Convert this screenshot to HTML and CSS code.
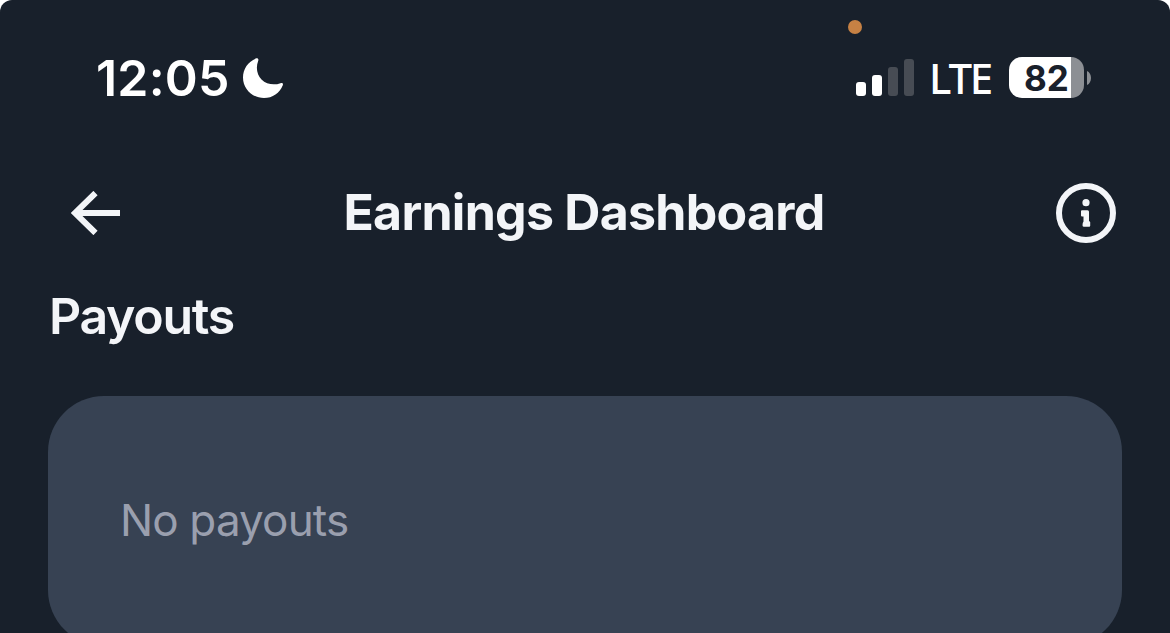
FILE: index.html
```
<!DOCTYPE html>
<html lang="en">
<head>
    <meta charset="UTF-8">
    <meta name="viewport" content="width=device-width, initial-scale=1.0">
    <title>Earnings Dashboard</title>
    <link rel="stylesheet" href="styles.css">
</head>
<body>
    <div class="screen">
        <!-- Status bar -->
        <div class="status-bar">
            <div class="status-left">
                <span class="time">12:05</span>
                <svg class="moon" viewBox="0 0 40 40">
                    <path d="M13.2 .3C14.6-.2 15.8 1 15.3 2.5C12.500 9.500 14 17 18.500 21.500C23.500 26.500 31 27.500 37.500 25.200C39.300 24.600 40.400 25.600 39.800 27.200C36.800 35 29.500 40 21 40C9.500 40 0 31 0 19.500C0 11 5 3.500 13.200 .3Z" fill="#fff"/>
                </svg>
            </div>
            <div class="status-right">
                <span class="mic-dot"></span>
                <div class="signal">
                    <span class="bar bar1"></span>
                    <span class="bar bar2"></span>
                    <span class="bar bar3 off"></span>
                    <span class="bar bar4 off"></span>
                </div>
                <span class="network">LTE</span>
                <div class="battery"><span class="battery-level">82</span></div>
                <svg class="battery-cap" viewBox="0 0 4 14">
                    <path d="M0 0C2.500 1 4 3.700 4 7S2.500 13 0 14Z" fill="#8c8f94"/>
                </svg>
            </div>
        </div>

        <!-- Navigation -->
        <header class="nav">
            <svg class="back" viewBox="0 0 50 44">
                <path d="M24.500 2L4 22L24.500 42M4 22H49" fill="none" stroke="#f3f5f8" stroke-width="6"/>
            </svg>
            <h1 class="title">Earnings Dashboard</h1>
            <svg class="info" viewBox="0 0 60 60">
                <circle cx="30" cy="30" r="27" fill="none" stroke="#f3f5f8" stroke-width="6"/>
                <circle cx="30" cy="19.700" r="3.600" fill="#f3f5f8"/>
                <path d="M26 27.200H31.500Q33 27.200 33 28.700V38.200H33.200Q34.200 38.200 34.200 39.200V42.800Q34.200 43.800 33.200 43.800H28Q26.500 43.800 26.500 42.300Q26.500 39.500 27.500 38.500V33.500H26Q25 33.500 25 32.500V28.200Q25 27.200 26 27.200Z" fill="#f3f5f8"/>
            </svg>
        </header>

        <main class="content">
            <h2 class="section-title">Payouts</h2>
            <div class="card">
                <p class="empty">No payouts</p>
            </div>
        </main>
    </div>
</body>
</html>
```
FILE: styles.css
```
* {
    box-sizing: border-box;
}

body {
    margin: 0;
    background: #fff;
    font-family: Inter, "Liberation Sans", sans-serif;
    overflow: hidden;
}

.screen {
    height: 633px;
    background: #18202b;
    border-radius: 12px 12px 0 0;
    overflow: hidden;
}

/* Status bar */
.status-bar {
    display: flex;
    justify-content: space-between;
    height: 156px;
    padding: 57px 79px 0 96px;
    color: #fff;
}

.status-left,
.status-right {
    display: flex;
    align-items: center;
    height: 41px;
}

.time {
    width: 147px;
    padding-top: 2px;
    font-size: 50px;
    font-weight: 600;
    line-height: 41px;
    letter-spacing: 0.2px;
}

.moon {
    width: 40px;
    height: 40px;
}

.status-right {
    position: relative;
}

/* microphone in use */
.mic-dot {
    position: absolute;
    top: -37px;
    left: -8px;
    width: 14px;
    height: 14px;
    border-radius: 50%;
    background: #c68144;
}

.signal {
    display: flex;
    align-items: flex-end;
    gap: 6px;
    height: 37px;
    margin-right: 15px;
}

.bar {
    width: 10px;
    border-radius: 3px;
    background: #fff;
}

.bar1 { height: 14px; }
.bar2 { height: 21px; }
.bar3 { height: 29px; }
.bar4 { height: 37px; }

.bar.off {
    background: #474c54;
}

.network {
    width: 80px;
    font-family: "Noto Sans", Inter, sans-serif;
    font-size: 42px;
    font-weight: 500;
    line-height: 41px;
    letter-spacing: -2.2px;
}

.battery {
    width: 75px;
    height: 41px;
    border-radius: 13px;
    background: linear-gradient(to right, #fff 62px, #8c8f94 62px);
}

.battery-level {
    display: block;
    padding-left: 15px;
    color: #19202b;
    font-size: 35px;
    font-weight: 700;
    line-height: 42px;
}

.battery-cap {
    width: 4px;
    height: 14px;
    margin-left: 3px;
}

/* Navigation */
.nav {
    display: flex;
    align-items: center;
    justify-content: space-between;
    height: 114px;
    padding: 0 54px 0 71px;
}

.back {
    width: 50px;
    height: 44px;
}

.title {
    margin: 0;
    padding: 0 9px 2px 0;
    color: #f3f5f8;
    font-size: 50px;
    font-weight: 700;
    line-height: 60px;
    letter-spacing: -0.72px;
    white-space: nowrap;
}

.info {
    width: 60px;
    height: 60px;
}

/* Payouts */
.content {
    padding: 16px 48px 0;
}

.section-title {
    margin: 0 0 50px;
    padding-left: 1px;
    color: #f3f5f8;
    font-size: 50px;
    font-weight: 600;
    line-height: 60px;
    letter-spacing: -1.3px;
}

.card {
    display: flex;
    align-items: center;
    height: 250px;
    padding: 0 72px;
    border-radius: 56px;
    background: #374253;
}

.empty {
    margin: 0;
    padding-bottom: 3px;
    color: #9a9fae;
    font-size: 44px;
    font-weight: 400;
    line-height: 52px;
    letter-spacing: -0.85px;
}
```
